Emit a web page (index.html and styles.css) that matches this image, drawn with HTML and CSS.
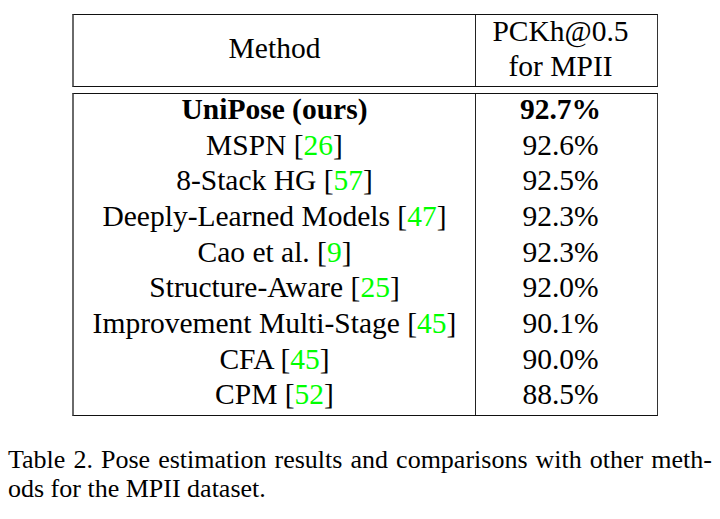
FILE: index.html
```html
<!DOCTYPE html>
<html lang="en">
<head>
<meta charset="utf-8">
<title>Table 2</title>
<link rel="stylesheet" href="styles.css">
</head>
<body>
<div class="page">
  <div class="results">
    <div class="box head">
      <div class="cell method">Method</div>
      <div class="cell metric"><div class="metric-text">PCKh@0.5<br>for MPII</div></div>
    </div>
    <div class="box body">
      <div class="cell name best">UniPose (ours)</div><div class="cell val best">92.7%</div>
      <div class="cell name">MSPN [<span class="cite">26</span>]</div><div class="cell val">92.6%</div>
      <div class="cell name">8-Stack HG [<span class="cite">57</span>]</div><div class="cell val">92.5%</div>
      <div class="cell name">Deeply-Learned Models [<span class="cite">47</span>]</div><div class="cell val">92.3%</div>
      <div class="cell name">Cao et al. [<span class="cite">9</span>]</div><div class="cell val">92.3%</div>
      <div class="cell name">Structure-Aware [<span class="cite">25</span>]</div><div class="cell val">92.0%</div>
      <div class="cell name">Improvement Multi-Stage [<span class="cite">45</span>]</div><div class="cell val">90.1%</div>
      <div class="cell name">CFA [<span class="cite">45</span>]</div><div class="cell val">90.0%</div>
      <div class="cell name">CPM [<span class="cite">52</span>]</div><div class="cell val">88.5%</div>
    </div>
  </div>
  <div class="caption">
    <div class="caption-line justified">Table 2. Pose estimation results and comparisons with other meth-</div>
    <div class="caption-line">ods for the MPII dataset.</div>
  </div>
</div>
</body>
</html>
```

FILE: styles.css
```css
html, body {
  margin: 0;
  padding: 0;
  background: #ffffff;
}

body {
  width: 720px;
  height: 519px;
  overflow: hidden;
  font-family: "Liberation Serif", "Times New Roman", serif;
  color: #000;
}

.page {
  padding-top: 14px;
}

.results {
  margin-left: 72px;
  width: 586px;
  display: flex;
  flex-direction: column;
  gap: 6px;
}

.box {
  display: grid;
  grid-template-columns: 402px 181px;
  border-top: 1px solid #111;
  border-bottom: 1px solid #111;
  border-left: 2px solid #6a6a6a;
  border-right: 1px solid #333;
  font-size: 29.5px;
}

.cell {
  text-align: center;
  white-space: nowrap;
}

.cell.method,
.cell.name {
  border-right: 1px solid #222;
}

.head {
  height: 71px;
}

.method {
  display: flex;
  align-items: center;
  justify-content: center;
  line-height: 30.5px;
  padding-bottom: 4px;
}

.metric {
  padding-right: 12px;
}

.metric-text {
  line-height: 35.7px;
  margin-top: -1.5px;
}

.body {
  grid-auto-rows: 35.667px;
  height: 321px;
}

.body .cell {
  line-height: 30.5px;
}

.val {
  padding-right: 12px;
}

.best {
  font-weight: bold;
}

.cite {
  color: #00ff00;
}

.caption {
  margin-top: 28.5px;
  margin-left: 8px;
  width: 704px;
  font-size: 26px;
  line-height: 29.5px;
}

.caption-line.justified {
  text-align: justify;
  text-align-last: justify;
}
```
